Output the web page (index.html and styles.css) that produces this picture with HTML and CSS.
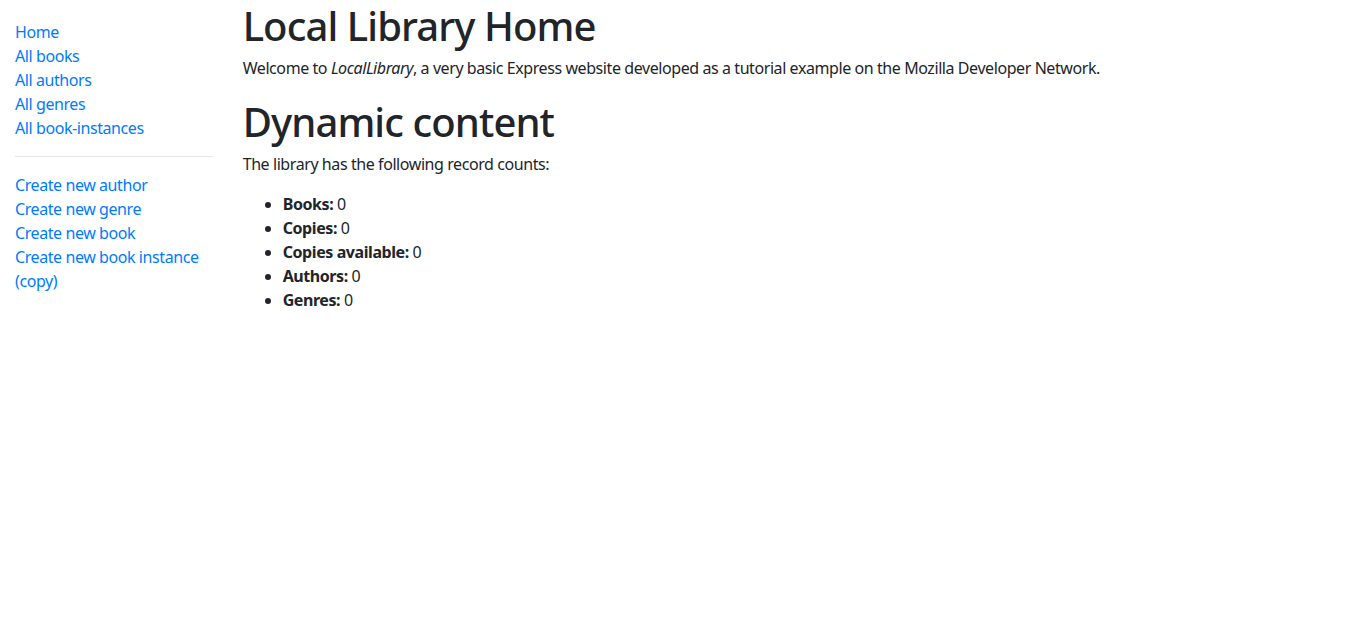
FILE: index.html
```html
<!DOCTYPE html>
<html lang="en">
<head>
<meta charset="utf-8">
<title>Local Library</title>
<link rel="stylesheet" href="styles.css">
</head>
<body>
<div class="container">
  <div class="row">
    <div class="sidebar">
      <ul class="sidebar-nav">
        <li><a href="#">Home</a></li>
        <li><a href="#">All books</a></li>
        <li><a href="#">All authors</a></li>
        <li><a href="#">All genres</a></li>
        <li><a href="#">All book-instances</a></li>
      </ul>
      <hr class="divider">
      <ul class="sidebar-nav second">
        <li><a href="#">Create new author</a></li>
        <li><a href="#">Create new genre</a></li>
        <li><a href="#">Create new book</a></li>
        <li><a href="#">Create new book instance (copy)</a></li>
      </ul>
    </div>
    <div class="content">
      <h1 class="title">Local Library Home</h1>
      <p class="para">Welcome to <em>LocalLibrary</em>, a very basic Express website developed as a tutorial example on the Mozilla Developer Network.</p>
      <h1 class="title">Dynamic content</h1>
      <p class="para">The library has the following record counts:</p>
      <ul class="counts">
        <li><strong>Books:</strong> 0</li>
        <li><strong>Copies:</strong> 0</li>
        <li><strong>Copies available:</strong> 0</li>
        <li><strong>Authors:</strong> 0</li>
        <li><strong>Genres:</strong> 0</li>
      </ul>
    </div>
  </div>
</div>
</body>
</html>
```
FILE: styles.css
```css
html, body {
  margin: 0;
  padding: 0;
  background: #fff;
}
body {
  font-family: "Noto Sans", "Open Sans", sans-serif;
  font-size: 16px;
  line-height: 24px;
  letter-spacing: -0.42px;
  color: #212529;
}
.container {
  padding: 0 15px;
}
.row {
  display: flex;
  margin: 0 -15px;
}
.sidebar {
  flex: 0 0 16.6667%;
  max-width: 16.6667%;
  padding: 0 15px;
  box-sizing: border-box;
}
.content {
  flex: 0 0 83.3333%;
  max-width: 83.3333%;
  padding: 0 15px;
  box-sizing: border-box;
}
.sidebar-nav {
  list-style: none;
  margin: 20px 0 16px;
  padding: 0;
}
.sidebar-nav.second {
  margin-top: 0;
}
.sidebar-nav a {
  color: #007bff;
  text-decoration: none;
}
.divider {
  margin: 16px 0;
  border: 0;
  border-top: 1px solid rgba(0, 0, 0, 0.1);
  height: 0;
}
.title {
  font-size: 40px;
  font-weight: 500;
  line-height: 48px;
  letter-spacing: -0.9px;
  margin: 0 0 6px;
  padding-top: 2px;
}
.para {
  margin: 0 0 16px;
}
.counts {
  margin: 0 0 16px;
  padding-left: 40px;
}
.counts strong {
  font-weight: 700;
}
```
